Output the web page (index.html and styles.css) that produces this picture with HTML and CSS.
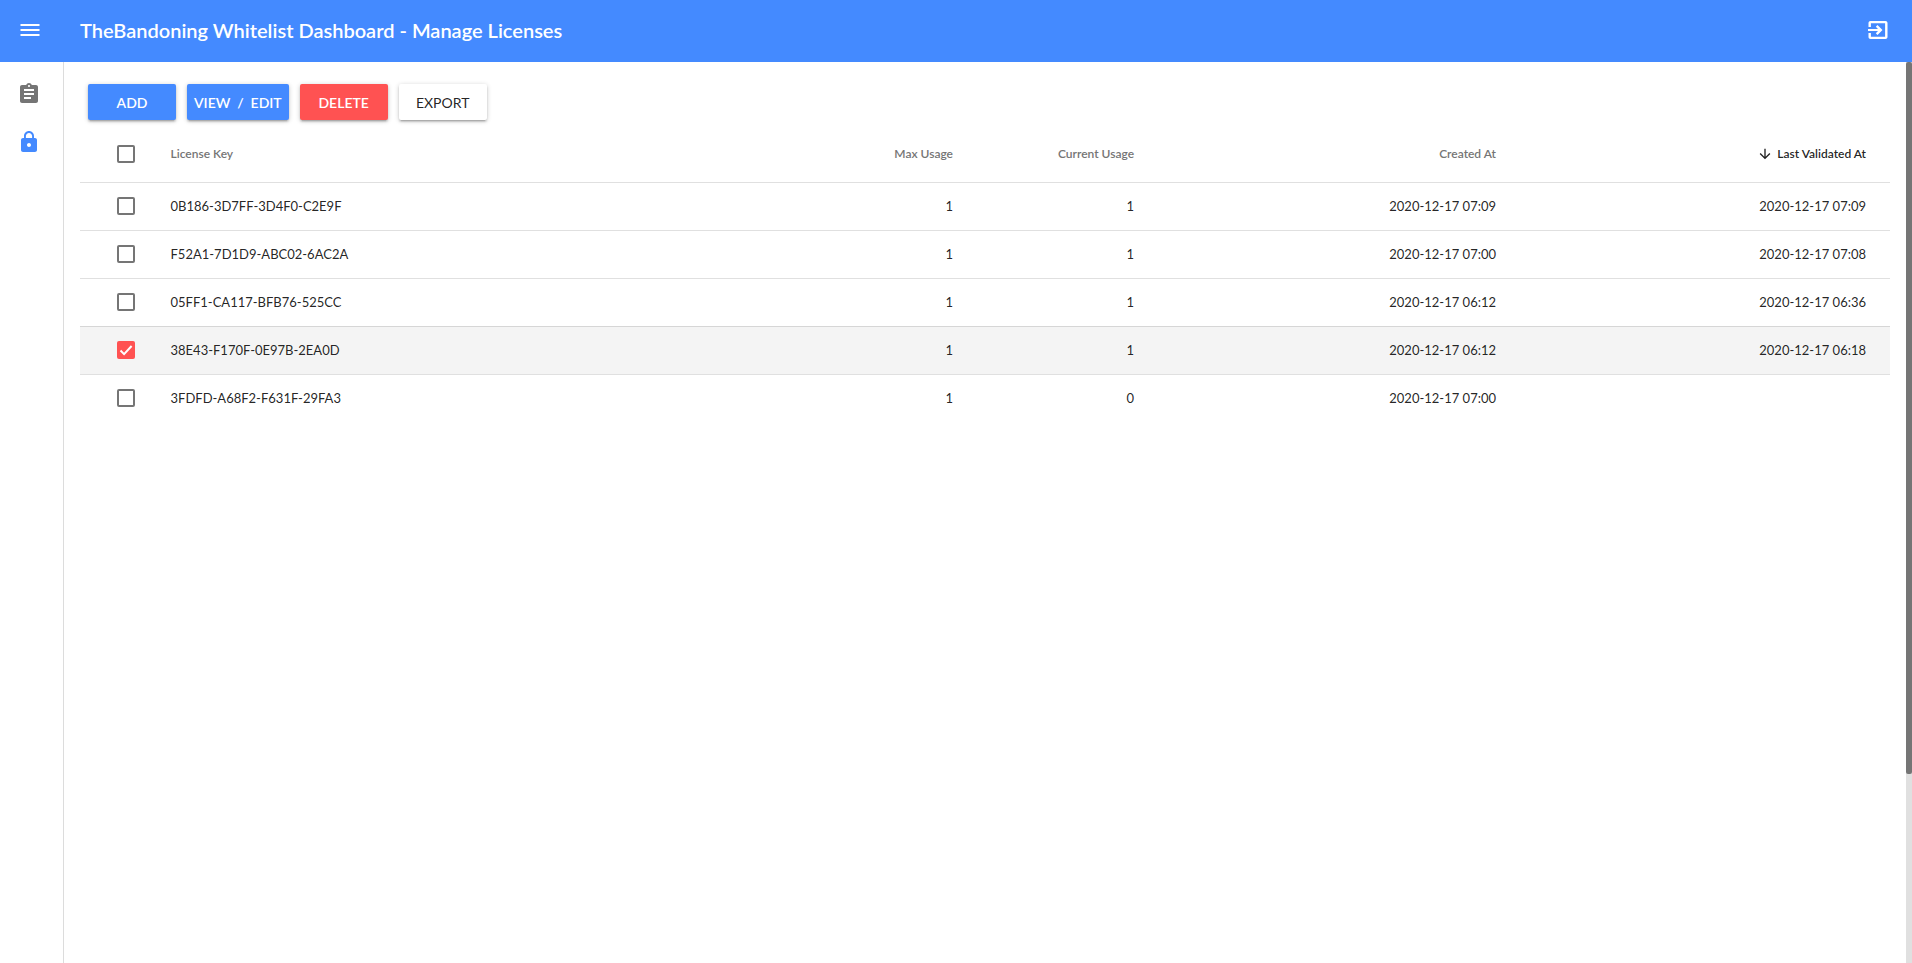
FILE: index.html
```html
<!DOCTYPE html>
<html lang="en">
<head>
<meta charset="utf-8">
<title>TheBandoning Whitelist Dashboard - Manage Licenses</title>
<link rel="stylesheet" href="styles.css">
</head>
<body>
<header class="toolbar">
  <button class="icon-button" type="button" aria-label="Menu">
    <svg viewBox="0 0 24 24"><path d="M2.5 6h19v2h-19zM2.5 11h19v2h-19zM2.5 16h19v2h-19z"/></svg>
  </button>
  <h1 class="title">TheBandoning Whitelist Dashboard - Manage Licenses</h1>
  <button class="icon-button" type="button" aria-label="Log out">
    <svg viewBox="0 0 24 24"><path d="M9.8 15.3L11.5 17l5-5-5-5-1.7 1.7L12 10.9H2v2.2h10zM19.5 3H4.5c-1.11 0-2 .9-2 2v4h2.4V5.2h14.2v13.6H4.9V15H2.5v4c0 1.1.89 2 2 2h15c1.1 0 2-.9 2-2V5c0-1.1-.9-2-2-2z"/></svg>
  </button>
</header>
<div class="layout">
  <nav class="sidebar">
    <a class="nav-link" href="#whitelists" aria-label="Whitelists">
      <svg viewBox="0 0 24 24"><path d="M19 3h-4.18C14.4 1.84 13.3 1 12 1c-1.3 0-2.4.84-2.82 2H5c-1.1 0-2 .9-2 2v14c0 1.1.9 2 2 2h14c1.1 0 2-.9 2-2V5c0-1.1-.9-2-2-2zm-7 0c.55 0 1 .45 1 1s-.45 1-1 1-1-.45-1-1 .45-1 1-1zm2 14H7v-2h7v2zm3-4H7v-2h10v2zm0-4H7V7h10v2z"/></svg>
    </a>
    <a class="nav-link active" href="#licenses" aria-label="Licenses" aria-current="page">
      <svg viewBox="0 0 24 24"><path d="M18 8h-1V6c0-2.76-2.24-5-5-5S7 3.24 7 6v2H6c-1.1 0-2 .9-2 2v10c0 1.1.9 2 2 2h12c1.1 0 2-.9 2-2V10c0-1.1-.9-2-2-2zm-6 9c-1.1 0-2-.9-2-2s.9-2 2-2 2 .9 2 2-.9 2-2 2zm3.1-9H8.9V6c0-1.71 1.39-3.1 3.1-3.1s3.1 1.39 3.1 3.1v2z"/></svg>
    </a>
  </nav>
  <main class="content">
    <div class="actions">
      <button class="button primary" type="button">ADD</button>
      <button class="button primary" type="button">VIEW &nbsp;/&nbsp; EDIT</button>
      <button class="button warn" type="button">DELETE</button>
      <button class="button" type="button">EXPORT</button>
    </div>
    <table class="licenses">
      <colgroup><col class="col-check"><col><col class="col-usage"><col class="col-usage"><col class="col-created"><col class="col-validated"></colgroup>
      <thead>
        <tr>
          <th class="check"><input type="checkbox" aria-label="Select all"></th>
          <th class="key">License Key</th>
          <th>Max Usage</th>
          <th>Current Usage</th>
          <th>Created At</th>
          <th class="sorted" aria-sort="descending"><svg viewBox="0 0 24 24"><path d="M20 12l-1.41-1.41L13 16.17V4h-2v12.17l-5.58-5.59L4 12l8 8 8-8z"/></svg>Last Validated At</th>
        </tr>
      </thead>
      <tbody>
        <tr><td class="check"><input type="checkbox" aria-label="Select 0B186-3D7FF-3D4F0-C2E9F"></td><td class="key">0B186-3D7FF-3D4F0-C2E9F</td><td>1</td><td>1</td><td>2020-12-17 07:09</td><td>2020-12-17 07:09</td></tr>
        <tr><td class="check"><input type="checkbox" aria-label="Select F52A1-7D1D9-ABC02-6AC2A"></td><td class="key">F52A1-7D1D9-ABC02-6AC2A</td><td>1</td><td>1</td><td>2020-12-17 07:00</td><td>2020-12-17 07:08</td></tr>
        <tr><td class="check"><input type="checkbox" aria-label="Select 05FF1-CA117-BFB76-525CC"></td><td class="key">05FF1-CA117-BFB76-525CC</td><td>1</td><td>1</td><td>2020-12-17 06:12</td><td>2020-12-17 06:36</td></tr>
        <tr class="selected"><td class="check"><input type="checkbox" checked aria-label="Select 38E43-F170F-0E97B-2EA0D"></td><td class="key">38E43-F170F-0E97B-2EA0D</td><td>1</td><td>1</td><td>2020-12-17 06:12</td><td>2020-12-17 06:18</td></tr>
        <tr><td class="check"><input type="checkbox" aria-label="Select 3FDFD-A68F2-F631F-29FA3"></td><td class="key">3FDFD-A68F2-F631F-29FA3</td><td>1</td><td>0</td><td>2020-12-17 07:00</td><td></td></tr>
      </tbody>
    </table>
  </main>
  <div class="scroll-track" aria-hidden="true"><div class="scroll-thumb"></div></div>
</div>
</body>
</html>
```
FILE: styles.css
```css
* { box-sizing: border-box; }

body {
  margin: 0;
  height: 100vh;
  display: flex;
  flex-direction: column;
  overflow: hidden;
  background: #fff;
  color: rgba(0, 0, 0, 0.87);
  font-family: Lato, "Liberation Sans", sans-serif;
}

svg { display: block; fill: currentColor; }

.toolbar {
  flex: none;
  display: flex;
  align-items: center;
  height: 62px;
  padding: 0 22px 2px 18px;
  background: #448aff;
  color: #fff;
}

.title {
  flex: 1;
  margin: 0 0 0 38px;
  font-size: 20px;
  line-height: 24px;
  font-weight: 600;
}

.icon-button {
  padding: 0;
  border: 0;
  background: none;
  color: inherit;
  cursor: pointer;
}

.icon-button svg { width: 24px; height: 24px; }

.layout { flex: 1; display: flex; min-height: 0; }

.sidebar {
  flex: none;
  display: flex;
  flex-direction: column;
  align-items: center;
  gap: 24px;
  width: 64px;
  padding: 20px 6px 0 0;
  border-right: 1px solid #dcdcdc;
}

.nav-link { color: #757575; }
.nav-link.active { color: #448aff; }
.nav-link svg { width: 24px; height: 24px; }

.content { flex: 1; min-width: 0; padding: 22px 16px 0; }

.actions { display: flex; gap: 11px; padding: 0 8px; }

.button {
  min-width: 88px;
  height: 36px;
  padding: 2px 7px 0;
  border: 0;
  border-radius: 2px;
  background: #fff;
  color: rgba(0, 0, 0, 0.87);
  box-shadow: 0 1px 5px rgba(0, 0, 0, 0.2), 0 2px 2px rgba(0, 0, 0, 0.14), 0 3px 1px -2px rgba(0, 0, 0, 0.12);
  font: 400 14px/20px Lato, "Liberation Sans", sans-serif;
  cursor: pointer;
}

.button.primary { background: #448aff; color: #fff; font-weight: 600; }
.button.warn { background: #ff5252; color: #fff; font-weight: 600; }

.licenses {
  width: 100%;
  margin-top: 6px;
  border-collapse: separate;
  border-spacing: 0;
  table-layout: fixed;
}

.col-check { width: 5%; }
.col-usage { width: 10%; }
.col-created { width: 20%; }
.col-validated { width: 394px; }

th, td { padding: 0; text-align: right; white-space: nowrap; }

th {
  height: 56px;
  color: #757575;
  font-size: 12px;
  line-height: 16px;
  font-weight: 600;
}

td {
  height: 48px;
  padding-bottom: 2px;
  border-top: 1px solid #e0e0e0;
  font-size: 13px;
  line-height: 16px;
}

th:last-child, td:last-child { padding-right: 24px; }
.key { text-align: left; }
.check { padding-left: 37px; text-align: left; }

.sorted { color: rgba(0, 0, 0, 0.87); }
.sorted svg {
  display: inline-block;
  width: 16px;
  height: 16px;
  margin-right: 4px;
  vertical-align: top;
}

.selected td { background: #f4f4f4; border-top-color: #d6d6d6; }

input[type="checkbox"] {
  appearance: none;
  display: block;
  width: 18px;
  height: 18px;
  margin: 0;
  border: 2px solid #757575;
  border-radius: 2px;
}

input[type="checkbox"]:checked {
  border: 0;
  background: #ff5252 url("data:image/svg+xml,%3Csvg xmlns='http://www.w3.org/2000/svg' viewBox='0 0 18 18'%3E%3Cpath d='M3.5 9.5l3.6 3.6L14.6 5' fill='none' stroke='white' stroke-width='2'/%3E%3C/svg%3E") center / 18px 18px no-repeat;
}

.scroll-track { flex: none; width: 6px; background: #e0e0e0; }
.scroll-thumb { height: 79%; border-radius: 2px; background: #757575; }
```
